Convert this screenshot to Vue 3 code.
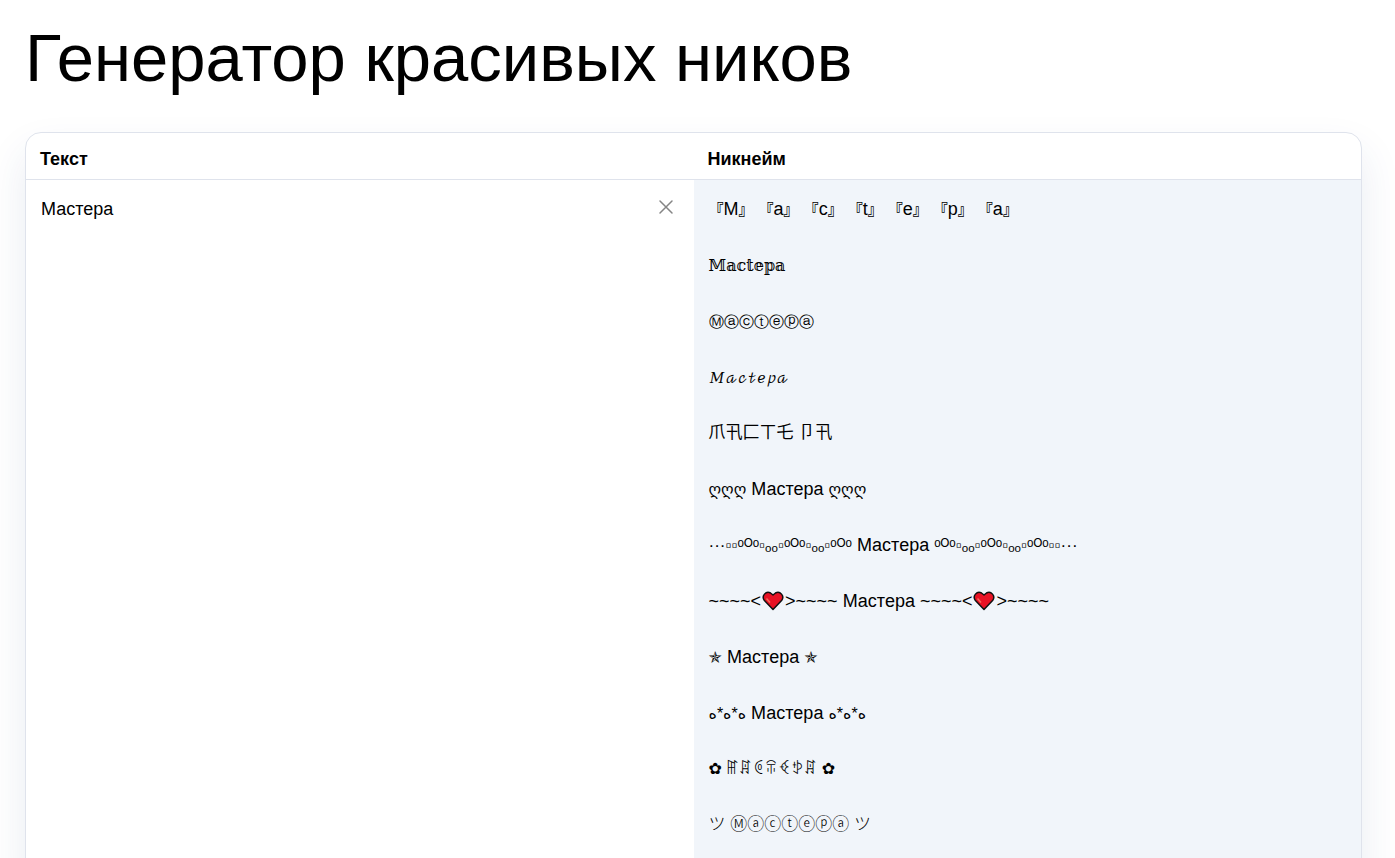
<script setup>
import { ref } from 'vue'

const text = ref('Мастера')
const nicknames = [
  { text: '『M』 『a』 『c』 『t』 『e』 『p』 『a』', kind: 'brackets' },
  { text: '𝕄𝕒𝕔𝕥𝕖𝕡𝕒', kind: 'outline' },
  { text: 'Ⓜⓐⓒⓣⓔⓟⓐ', kind: 'circled' },
  { text: '𝑀𝒶𝒸𝓉𝑒𝓅𝒶', kind: 'script' },
  { text: '爪卂匚ㄒ乇 卩卂', kind: 'east' },
  { text: 'ღღღ Мастера ღღღ', kind: 'georgian' },
  { text: '···▫▫ᵒᴼᵒ▫ₒₒ▫ᵒᴼᵒ▫ₒₒ▫ᵒᴼᵒ Мастера ᵒᴼᵒ▫ₒₒ▫ᵒᴼᵒ▫ₒₒ▫ᵒᴼᵒ▫▫···', kind: 'bubbles' },
  { text: '~~~~<❤>~~~~ Мастера ~~~~<❤>~~~~', kind: 'plain' },
  { text: '✯ Мастера ✯', kind: 'star' },
  { text: 'ﻩ*ﻩ*ﻩ Мастера ﻩ*ﻩ*ﻩ', kind: 'rings' },
  { text: '✿ ꂵꁲꏲꋖꈼꉣꁲ ✿', kind: 'yi' },
  { text: 'ツ Ⓜⓐⓒⓣⓔⓟⓐ ツ', kind: 'smile' }
]

// Splits a nickname into plain letters, hearts and decorative runs.
const parts = (value) => value.split(/(❤|[А-Яа-яA-Za-z ]+)/).filter(Boolean)
const isLetters = (part) => /^[А-Яа-яA-Za-z ]+$/.test(part)
</script>

<template>
  <main class="page">
    <h1>Генератор красивых ников</h1>
    <section class="card">
      <header class="head">
        <label for="source">Текст</label>
        <h2>Никнейм</h2>
      </header>
      <div class="body">
        <div class="source">
          <textarea id="source" v-model="text" spellcheck="false"></textarea>
          <button type="button" aria-label="Очистить" @click="text = ''">
            <svg width="16" height="16" viewBox="0 0 16 16" fill="none" stroke="#858585" stroke-width="1.5" stroke-linecap="round"><path d="M2 2l12 12M14 2L2 14" /></svg>
          </button>
        </div>
        <ul class="results">
          <li v-for="nick in nicknames" :key="nick.text" :class="nick.kind">
            <template v-for="(part, i) in parts(nick.text)" :key="i">
              <svg v-if="part === '❤'" class="heart" width="24" height="20" viewBox="0 0 24 20" role="img" aria-label="❤"><path d="M12 18.500L3.400 9.600C0 5 5-.5 9.500 2L12 4l2.500-2C19-.5 24 5 20.600 9.600Z" fill="#e81224" stroke="#111" stroke-width="1.500" stroke-linejoin="round" /><path d="M5.500 7.500l3.500 4" stroke="#f36b5b" stroke-width="1.500" /></svg>
              <template v-else-if="isLetters(part)">{{ part }}</template>
              <span v-else class="deco" :class="{ flower: part === '✿' }">{{ part }}</span>
            </template>
          </li>
        </ul>
      </div>
    </section>
  </main>
</template>

<style>
body { margin: 0; background: #fff; }
</style>

<style scoped>
* { box-sizing: border-box; }
.page {
  height: 100vh;
  overflow: hidden;
  padding: 16px 33px 0 25px;
  color: #000;
  font-family: "Liberation Sans", "DejaVu Sans", "Noto Sans CJK JP", sans-serif;
  font-size: 18px;
  line-height: 24px;
}
h1 { margin: 0 0 32px; font-size: 67px; line-height: 84px; font-weight: 400; white-space: nowrap; }
.card {
  border: 1px solid #dfe3ec;
  border-radius: 16px;
  overflow: hidden;
  box-shadow: 0 20px 40px rgba(40, 70, 130, .1);
  background: #fff;
}
.head { display: grid; grid-template-columns: 1fr 1fr; border-bottom: 1px solid #dfe3ec; }
.head label, .head h2 { margin: 0; padding: 14px 14px 8px; font-size: 18px; line-height: 24px; font-weight: 700; }
.body { display: grid; grid-template-columns: 1fr 1fr; }
.source { display: flex; align-items: flex-start; padding: 17px 15px; }
textarea {
  flex: 1;
  align-self: stretch;
  border: 0;
  outline: 0;
  padding: 0;
  resize: none;
  background: transparent;
  color: inherit;
  font: inherit;
}
button { display: flex; padding: 2px 5px; border: 0; background: transparent; cursor: pointer; }
.results { margin: 0; padding: 1px 0 24px; list-style: none; background: #f1f5fa; }
li { height: 56px; padding: 16px 15px; white-space: pre; }
.deco { line-height: 1; }
.heart { vertical-align: -4px; }
.brackets .deco { font-family: "Noto Sans CJK JP", sans-serif; font-size: 15px; font-weight: 700; }
.outline .deco { font-family: "DejaVu Serif", serif; font-size: 16px; }
.circled .deco { font-family: "DejaVu Sans", sans-serif; font-size: 15px; }
.script .deco { font-family: "DejaVu Math TeX Gyre", serif; font-size: 14px; }
.east .deco { font-family: "Noto Sans CJK JP", sans-serif; font-weight: 400; }
.east { font-size: 17px; }
.georgian .deco { font-size: 16px; }
.bubbles .deco { font-size: 17px; }
.star .deco, .rings .deco { font-size: 16px; }
.yi { font-size: 16px; }
.smile { font-family: "Liberation Sans", "Noto Sans CJK JP", sans-serif; font-size: 17px; font-weight: 300; }
.flower { font-weight: 700; }
</style>
